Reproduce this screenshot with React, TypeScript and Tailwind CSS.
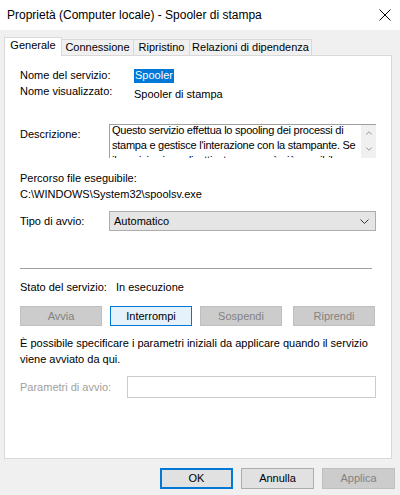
import { ChevronDown, ChevronUp } from 'lucide-react'

const tabs = [
  { label: 'Generale', w: 'w-[58px]', active: true },
  { label: 'Connessione', w: 'w-[72px]', active: false },
  { label: 'Ripristino', w: 'w-[56px]', active: false },
  { label: 'Relazioni di dipendenza', w: 'w-[122px]', active: false }
]

function ServiceButton({ label, enabled }: { label: string; enabled?: boolean }) {
  return (
    <div
      className={`h-[20px] w-[82px] flex items-center justify-center border ${
        enabled ? 'bg-[#e5f1fb] border-[#0078d7] text-black' : 'bg-[#cccccc] border-[#bfbfbf] text-[#838383]'
      }`}
    >
      {label}
    </div>
  )
}

export default function App() {
  return (
    <div
      className="w-[400px] h-[495px] bg-[#f0f0f0] overflow-hidden text-[11px] text-black leading-[15px]"
      style={{ fontFamily: '"Liberation Sans", Arial, sans-serif' }}
    >
      {/* title bar */}
      <div className="h-[30px] bg-white flex items-center justify-between pl-[7px] pr-[8px]">
        <span className="text-[12px]">Proprietà (Computer locale) - Spooler di stampa</span>
        <svg width="12" height="12" viewBox="0 0 12 12" className="mr-[1px]">
          <path d="M0.5 0.5 L11.5 11.5 M11.5 0.5 L0.5 11.5" stroke="#000" strokeWidth="1" />
        </svg>
      </div>

      {/* tabs */}
      <div className="h-[25px] pt-[7px] pl-[4px] flex items-end">
        {tabs.map((t) =>
          t.active ? (
            <div
              key={t.label}
              className={`${t.w} h-[19px] bg-white border border-b-0 border-[#d9d9d9] flex items-center justify-center relative z-10 -mb-[1px] pb-[3px]`}
            >
              {t.label}
            </div>
          ) : (
            <div
              key={t.label}
              className={`${t.w} h-[16px] bg-[#f0f0f0] border border-l-0 border-b-0 border-[#d9d9d9] flex items-center justify-center`}
            >
              {t.label}
            </div>
          )
        )}
      </div>

      {/* panel */}
      <div className="mx-[4px] w-[388px] h-[404px] bg-white border border-[#d9d9d9] pl-[15px] flex flex-col">
        <div className="mt-[12px] h-[15px] flex items-center">
          <span className="w-[114px]">Nome del servizio:</span>
          <span className="bg-[#0078d7] text-white px-[1px] h-[14px] flex items-center">Spooler</span>
        </div>
        <div className="h-[16px] flex items-start">
          <span className="w-[114px] mt-[1px]">Nome visualizzato:</span>
          <span className="mt-[4px]">Spooler di stampa</span>
        </div>

        <div className="mt-[25px] flex items-start">
          <span className="w-[89px] pt-[3px]">Descrizione:</span>
          <div className="w-[267px] h-[34px] border border-[#a0a0a0] border-r-0 border-b-0 flex overflow-hidden">
            <div className="flex-1 h-[33px] pl-[2px] overflow-hidden">
              <div className="-mt-[2px] text-[11px] leading-[15px] tracking-[-0.25px]">
                Questo servizio effettua lo spooling dei processi di stampa e gestisce l'interazione con la stampante. Se il servizio viene disattivato, non sarà più possibile
              </div>
            </div>
            <div className="w-[15px] bg-[#f0f0f0] flex flex-col items-center justify-between pt-[3px] pb-[4px] text-[#606060]">
              <ChevronUp size={10} strokeWidth={1.5} />
              <ChevronDown size={10} strokeWidth={1.5} />
            </div>
          </div>
        </div>

        <div className="mt-[13px] h-[15px]">Percorso file eseguibile:</div>
        <div className="mt-[1px] h-[15px]">C:\WINDOWS\System32\spoolsv.exe</div>

        <div className="mt-[9px] flex items-center">
          <span className="w-[89px]">Tipo di avvio:</span>
          <div className="w-[267px] h-[20px] bg-[#e5e5e5] border border-[#adadad] flex items-center justify-between pl-[4px] pr-[6px]">
            <span>Automatico</span>
            <svg width="9" height="5" viewBox="0 0 9 5">
              <path d="M0.5 0.5 L4.5 4.5 L8.5 0.5" stroke="#333" strokeWidth="1" fill="none" />
            </svg>
          </div>
        </div>

        <div className="mt-[37px] h-[1px] w-[352px] bg-[#a0a0a0]" />

        <div className="mt-[11px] h-[15px] flex items-center">
          <span className="w-[96px]">Stato del servizio:</span>
          <span>In esecuzione</span>
        </div>

        <div className="mt-[11px] flex gap-[8px]">
          <ServiceButton label="Avvia" />
          <ServiceButton label="Interrompi" enabled />
          <ServiceButton label="Sospendi" />
          <div className="ml-[3px]">
            <ServiceButton label="Riprendi" />
          </div>
        </div>

        <div className="mt-[9px] leading-[16px] w-[362px]">
          È possibile specificare i parametri iniziali da applicare quando il servizio viene avviato da qui.
        </div>

        <div className="mt-[9px] flex items-center">
          <span className="w-[107px] text-[#a0a0a0]">Parametri di avvio:</span>
          <div className="w-[249px] h-[22px] border border-[#cccccc] bg-white" />
        </div>
      </div>

      {/* bottom buttons */}
      <div className="mt-[9px] flex justify-end gap-[8px] pr-[5px]">
        <div className="w-[73px] h-[21px] bg-[#e1e1e1] border-2 border-[#0078d7] flex items-center justify-center">OK</div>
        <div className="w-[73px] h-[21px] bg-[#e1e1e1] border border-[#adadad] flex items-center justify-center">Annulla</div>
        <div className="w-[73px] h-[21px] bg-[#cccccc] border border-[#bfbfbf] text-[#838383] flex items-center justify-center">Applica</div>
      </div>
    </div>
  )
}
